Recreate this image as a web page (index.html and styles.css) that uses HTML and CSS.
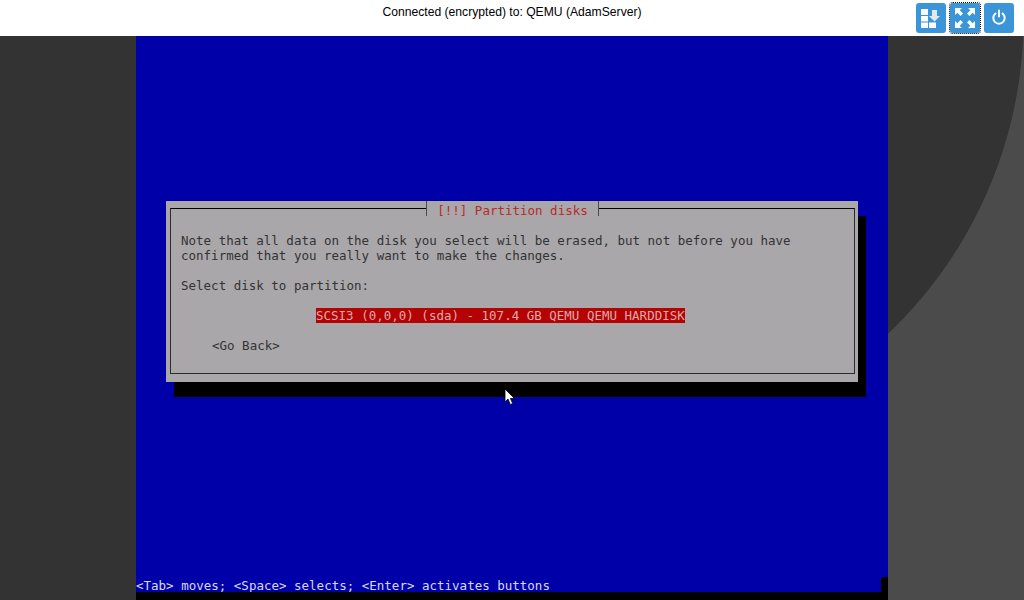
FILE: index.html
```html
<!DOCTYPE html>
<html lang="en">
<head>
<meta charset="utf-8">
<title>QEMU (AdamServer)</title>
<link rel="stylesheet" href="styles.css">
</head>
<body>
<header class="topbar">
  <div class="status-title">Connected (encrypted) to: QEMU (AdamServer)</div>
  <div class="controls">
    <button class="ctl" type="button" aria-label="Send keys">
      <svg viewBox="0 0 30 30" class="ico">
        <rect x="5" y="6" width="7" height="6"/>
        <rect x="5" y="13" width="7" height="5.5"/>
        <rect x="5" y="19.5" width="7" height="5.5"/>
        <rect x="13" y="19.5" width="7" height="5.5"/>
        <path class="arrow" d="M16 7h5v6h3l-5.500 5.500-5.500-5.500h3z"/>
      </svg>
    </button>
    <button class="ctl ctl-focus" type="button" aria-label="Fullscreen">
      <svg viewBox="0 0 30 30" class="ico">
        <path d="M5 5h7l-2.300 2.300 3.300 3.300-2.400 2.400-3.300-3.300L5 12z"/>
        <path d="M25 5h-7l2.300 2.300-3.300 3.300 2.400 2.400 3.300-3.300L25 12z"/>
        <path d="M5 25h7l-2.300-2.300 3.300-3.300-2.400-2.400-3.300 3.300L5 18z"/>
        <path d="M25 25h-7l2.300-2.300-3.300-3.300 2.400-2.400 3.300 3.300L25 18z"/>
      </svg>
    </button>
    <button class="ctl" type="button" aria-label="Power">
      <svg viewBox="0 0 30 30" class="ico">
        <path class="ring" d="M11.500 10.500a5.700 5.700 0 1 0 7 0"/>
        <path class="ring" d="M15 7.500v6"/>
      </svg>
    </button>
  </div>
</header>
<main class="stage">
  <section class="screen">
    <div class="dialog">
      <div class="frame">
        <p class="line first">Note that all data on the disk you select will be erased, but not before you have</p>
        <p class="line">confirmed that you really want to make the changes.</p>
        <p class="line gap">Select disk to partition:</p>
        <p class="line gap indent"><span class="selected">SCSI3 (0,0,0) (sda) - 107.4 GB QEMU QEMU HARDDISK</span></p>
        <p class="line gap back">&lt;Go Back&gt;</p>
      </div>
      <h1 class="dialog-title">[!!] Partition disks</h1>
    </div>
    <div class="status-row">
      <span class="status-text">&lt;Tab&gt; moves; &lt;Space&gt; selects; &lt;Enter&gt; activates buttons</span>
      <span class="status-end"></span>
    </div>
    <div class="bottom-bar"></div>
    <svg class="cursor" viewBox="0 0 12 18" width="12" height="18">
      <path d="M1 1v13l3-3 2.300 5.500 2.400-1L6.400 10.500H10.500z"/>
    </svg>
  </section>
</main>
</body>
</html>
```
FILE: styles.css
```css
html, body {
  margin: 0;
  height: 600px;
  overflow: hidden;
}
body {
  display: flex;
  flex-direction: column;
  background:
    linear-gradient(to right, #333333 600px, transparent 600px),
    radial-gradient(circle 436px at 588px 18px, #333333 99.8%, #4b4b4b 100%);
  background-color: #4b4b4b;
  font-family: "Liberation Sans", Arial, sans-serif;
}
.topbar {
  position: relative;
  flex: 0 0 36px;
  background: #fff;
}
.status-title {
  padding-top: 5px;
  text-align: center;
  font-size: 12.150px;
  line-height: 14px;
  color: #000;
}
.controls {
  position: absolute;
  top: 3px;
  right: 10px;
  display: flex;
  gap: 4px;
}
.ctl {
  width: 30px;
  height: 30px;
  padding: 0;
  border: 0;
  border-radius: 3px;
  background: #3b96d9;
}
.ctl-focus {
  outline: 1px dotted #000;
}
.ico {
  display: block;
  width: 30px;
  height: 30px;
  fill: #fff;
}
.arrow {
  fill: #e4e8ea;
}
.ring {
  fill: none;
  stroke: #fff;
  stroke-width: 2;
  stroke-linecap: round;
}
.stage {
  flex: 1;
  display: flex;
  justify-content: center;
  min-height: 0;
}
.screen {
  position: relative;
  width: 752px;
  height: 564px;
  display: flex;
  flex-direction: column;
  background: #0000a8;
  font-family: "DejaVu Sans Mono", monospace;
  font-size: 12.500px;
  line-height: 15px;
}
.dialog {
  position: relative;
  width: 692px;
  height: 181px;
  box-sizing: border-box;
  margin: 165px 0 0 30px;
  padding: 7px 3px 8px 4px;
  background: #a9a7aa;
  box-shadow: 8px 15px 0 #000;
}
.frame {
  height: 100%;
  box-sizing: border-box;
  padding: 24px 10px 0;
  border: 1px solid #2c2c2c;
  border-top-color: #000;
}
.line {
  margin: 0;
  height: 15px;
  white-space: pre;
  color: #333;
}
.gap {
  margin-top: 15px;
}
.indent {
  padding-left: 135px;
}
.back {
  padding-left: 31px;
}
.selected {
  display: inline-block;
  background: #b50303;
  color: #dcaaaa;
}
.dialog-title {
  position: absolute;
  top: 0;
  left: 260px;
  width: 171px;
  height: 15px;
  margin: 0;
  border-left: 1.500px solid #4a4a4a;
  border-right: 1.500px solid #4a4a4a;
  background: #a9a7aa;
  text-align: center;
  font: inherit;
  line-height: 19px;
  color: #b92a2a;
}
.status-row {
  display: flex;
  margin-top: auto;
  height: 15px;
  line-height: 17px;
  color: #d8d8f0;
}
.status-text {
  flex: 1;
  white-space: pre;
}
.status-end {
  flex: 0 0 7px;
  background: #000;
}
.bottom-bar {
  flex: 0 0 8px;
  background: #000;
}
.cursor {
  position: absolute;
  left: 368px;
  top: 352px;
  fill: #fff;
  stroke: #000;
  stroke-width: 0.800;
}
```
